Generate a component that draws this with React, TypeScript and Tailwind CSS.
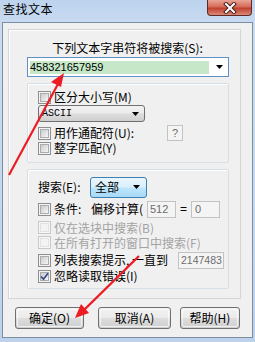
import React from 'react';

const cjk = '"Noto Sans CJK SC", "Noto Sans", sans-serif';

function Check({ checked, disabled }: { checked?: boolean; disabled?: boolean }) {
  return (
    <span className={disabled ? 'relative block w-[13px] h-[13px] shrink-0 border border-[#c8c8c8] bg-[#f7f7f7]' : 'relative block w-[13px] h-[13px] shrink-0 border border-[#8e8f8f] bg-[#f4f4f4]'}>
      <span className={disabled ? 'absolute inset-[1px] border border-[#e2e2e2] bg-[#f3f3f3]' : 'absolute inset-[1px] border border-[#a9adb2] bg-[linear-gradient(135deg,#cbcbcb,#f6f6f6)]'} />
      {checked && (
        <svg className="absolute left-0 top-0" width="11" height="11" viewBox="0 0 11 11">
          <path d="M2 5.5 L4.5 8.2 L9 2.2" fill="none" stroke="#3b4f86" strokeWidth="1.8" />
        </svg>
      )}
    </span>
  );
}

function Row({ label, checked, disabled, className }: { label: string; checked?: boolean; disabled?: boolean; className: string }) {
  return (
    <div className={`flex items-center pl-[10px] ${className}`}>
      <Check checked={checked} disabled={disabled} />
      <span className={disabled ? 'ml-[3px] text-[12px] leading-[14px] text-[#a3a3a3]' : 'ml-[3px] text-[12px] leading-[14px] text-black'}>{label}</span>
    </div>
  );
}

function Arrow() {
  return (
    <svg width="7" height="4" viewBox="0 0 7 4" className="shrink-0">
      <polygon points="0,0 7,0 3.5,4" fill="#000" />
    </svg>
  );
}

function Btn({ label, w }: { label: string; w: string }) {
  return (
    <div className={`${w} h-[22px] rounded-[3px] border border-[#707070] p-[1px] bg-[linear-gradient(180deg,#f2f2f2_0%,#ebebeb_48%,#dddddd_52%,#cfcfcf_100%)]`}>
      <div className="w-full h-full rounded-[2px] border border-[#fcfcfc]/70 flex items-center justify-center text-[12px] leading-[14px] text-black">
        {label}
      </div>
    </div>
  );
}

export default function App() {
  return (
    <div className="relative w-[255px] h-[342px] overflow-hidden bg-[linear-gradient(180deg,#bcd3ee_0%,#cbdcf1_8%,#c3d7ee_60%,#bdd2ea_100%)]" style={{ fontFamily: cjk }}>
      <div className="h-[22px] flex items-start justify-between">
        <span className="ml-[3px] mt-[2px] text-[12px] leading-[14px] tracking-[0.5px] text-black">查找文本</span>
        <div className="mr-[3px] w-[45px] h-[16px] rounded-b-[4px] border border-t-0 border-[#5f2a24] bg-[linear-gradient(180deg,#e9a597_0%,#d66a58_45%,#c0402f_55%,#d98a78_100%)] flex items-center justify-center">
          <svg width="14" height="12" viewBox="0 0 14 12">
            <path d="M3 2 L11 10 M11 2 L3 10" stroke="#45201b" strokeWidth="4" strokeLinecap="square" />
            <path d="M3 2 L11 10 M11 2 L3 10" stroke="#ffffff" strokeWidth="2" strokeLinecap="square" />
          </svg>
        </div>
      </div>

      <div className="ml-[2px] w-[251px] h-[316px] border border-[#7d8ea3] bg-[#f0f0f0]">
        <div className="ml-[5px] mt-[6px] w-[233px] h-[270px] border border-[#d5d5d5] shadow-[inset_1px_1px_0_#ffffff]">
          <div className="mt-[11px] h-[14px] pl-[6px] text-center text-[12px] leading-[14px] text-black">下列文本字串符将被搜索(S):</div>

          <div className="ml-[18px] mt-[2px] w-[202px] h-[20px] border border-[#5e8fc6] bg-white flex items-center pl-[2px] pr-[5px]">
            <div className="w-[179px] h-[13px] bg-[#c6e8c8] flex items-center text-[11px] leading-[13px] text-black" style={{ fontFamily: '"Liberation Sans", Arial, sans-serif' }}>
              458321657959
            </div>
            <div className="ml-auto"><Arrow /></div>
          </div>

          <div className="ml-[18px] mt-[6px] w-[202px] h-[80px] border border-[#d5dfe5] rounded-[2px] shadow-[inset_1px_1px_0_#ffffff] pt-[6px]">
            <Row label="区分大小写(M)" className="h-[14px]" />
            <div className="ml-[10px] mt-[1px] w-[107px] h-[17px] rounded-[3px] border border-[#707070] bg-[linear-gradient(180deg,#f2f2f2_0%,#ebebeb_48%,#dddddd_52%,#cfcfcf_100%)] flex items-center pl-[3px] pr-[5px]">
              <span className="text-[10px] leading-[12px] text-black" style={{ fontFamily: '"Liberation Mono", monospace' }}>ASCII</span>
              <div className="ml-auto"><Arrow /></div>
            </div>
            <div className="mt-[3px] h-[16px] flex items-center">
              <Row label="用作通配符(U):" className="w-[139px] h-[16px]" />
              <div className="w-[16px] h-[16px] border border-[#c3c3c3] bg-[#f4f4f4] flex items-center justify-center text-[11px] leading-[12px] text-[#6d6d6d]" style={{ fontFamily: '"Liberation Sans", Arial, sans-serif' }}>?</div>
            </div>
            <Row label="整字匹配(Y)" className="h-[14px]" />
          </div>

          <div className="ml-[18px] mt-[6px] w-[202px] h-[120px] border border-[#d5dfe5] rounded-[2px] shadow-[inset_1px_1px_0_#ffffff] pt-[6px]">
            <div className="h-[22px] flex items-center pl-[10px]">
              <span className="w-[52px] text-[12px] leading-[14px] text-black">搜索(E):</span>
              <div className="w-[57px] h-[21px] rounded-[3px] border border-[#3c7fb1] bg-[linear-gradient(180deg,#eaf6fd_0%,#d9f0fc_48%,#bee6fd_52%,#a7d9f5_100%)] flex items-center pl-[4px] pr-[6px]">
                <span className="text-[12px] leading-[14px] text-black">全部</span>
                <div className="ml-auto"><Arrow /></div>
              </div>
            </div>
            <div className="mt-[2px] h-[18px] flex items-center pl-[10px]">
              <Check />
              <span className="ml-[3px] w-[37px] text-[12px] leading-[14px] text-black">条件:</span>
              <span className="w-[56px] text-[12px] leading-[14px] text-black">偏移计算(</span>
              <div className="w-[29px] h-[17px] border border-[#c3c3c3] bg-[#f4f4f4] flex items-center pl-[2px] text-[11px] leading-[12px] text-[#6d6d6d]" style={{ fontFamily: '"Liberation Sans", Arial, sans-serif' }}>512</div>
              <span className="w-[15px] text-center text-[12px] leading-[14px] text-black" style={{ fontFamily: '"Liberation Sans", Arial, sans-serif' }}>=</span>
              <div className="w-[29px] h-[17px] border border-[#c3c3c3] bg-[#f4f4f4] flex items-center pl-[3px] text-[11px] leading-[12px] text-[#6d6d6d]" style={{ fontFamily: '"Liberation Sans", Arial, sans-serif' }}>0</div>
            </div>
            <Row label="仅在选块中搜索(B)" disabled className="mt-[2px] h-[15px]" />
            <Row label="在所有打开的窗口中搜索(F)" disabled className="h-[15px]" />
            <div className="mt-[1px] h-[18px] flex items-center">
              <Row label="列表搜索提示, 一直到" className="w-[150px] h-[18px]" />
              <div className="w-[46px] h-[17px] border border-[#c3c3c3] bg-[#f4f4f4] flex items-center pl-[2px] text-[10.5px] leading-[12px] text-[#6d6d6d] overflow-hidden whitespace-nowrap" style={{ fontFamily: '"Liberation Sans", Arial, sans-serif' }}>2147483</div>
            </div>
            <Row label="忽略读取错误(I)" checked className="h-[14px]" />
          </div>
        </div>

        <div className="mt-[8px] ml-[12px] flex items-center">
          <Btn label="确定(O)" w="w-[69px]" />
          <div className="ml-[14px]"><Btn label="取消(A)" w="w-[73px]" /></div>
          <div className="ml-[9px]"><Btn label="帮助(H)" w="w-[60px]" /></div>
        </div>
      </div>

      <svg className="absolute left-0 top-0 pointer-events-none" width="255" height="342" viewBox="0 0 255 342">
        <line x1="9" y1="175" x2="58" y2="84" stroke="#ec1c24" strokeWidth="2.2" />
        <polygon points="64,73 51,82 61,87" fill="#ec1c24" />
        <line x1="139" y1="256" x2="84" y2="310" stroke="#ec1c24" strokeWidth="2.4" />
        <polygon points="75,318 81,304 89,313" fill="#ec1c24" />
      </svg>
    </div>
  );
}
